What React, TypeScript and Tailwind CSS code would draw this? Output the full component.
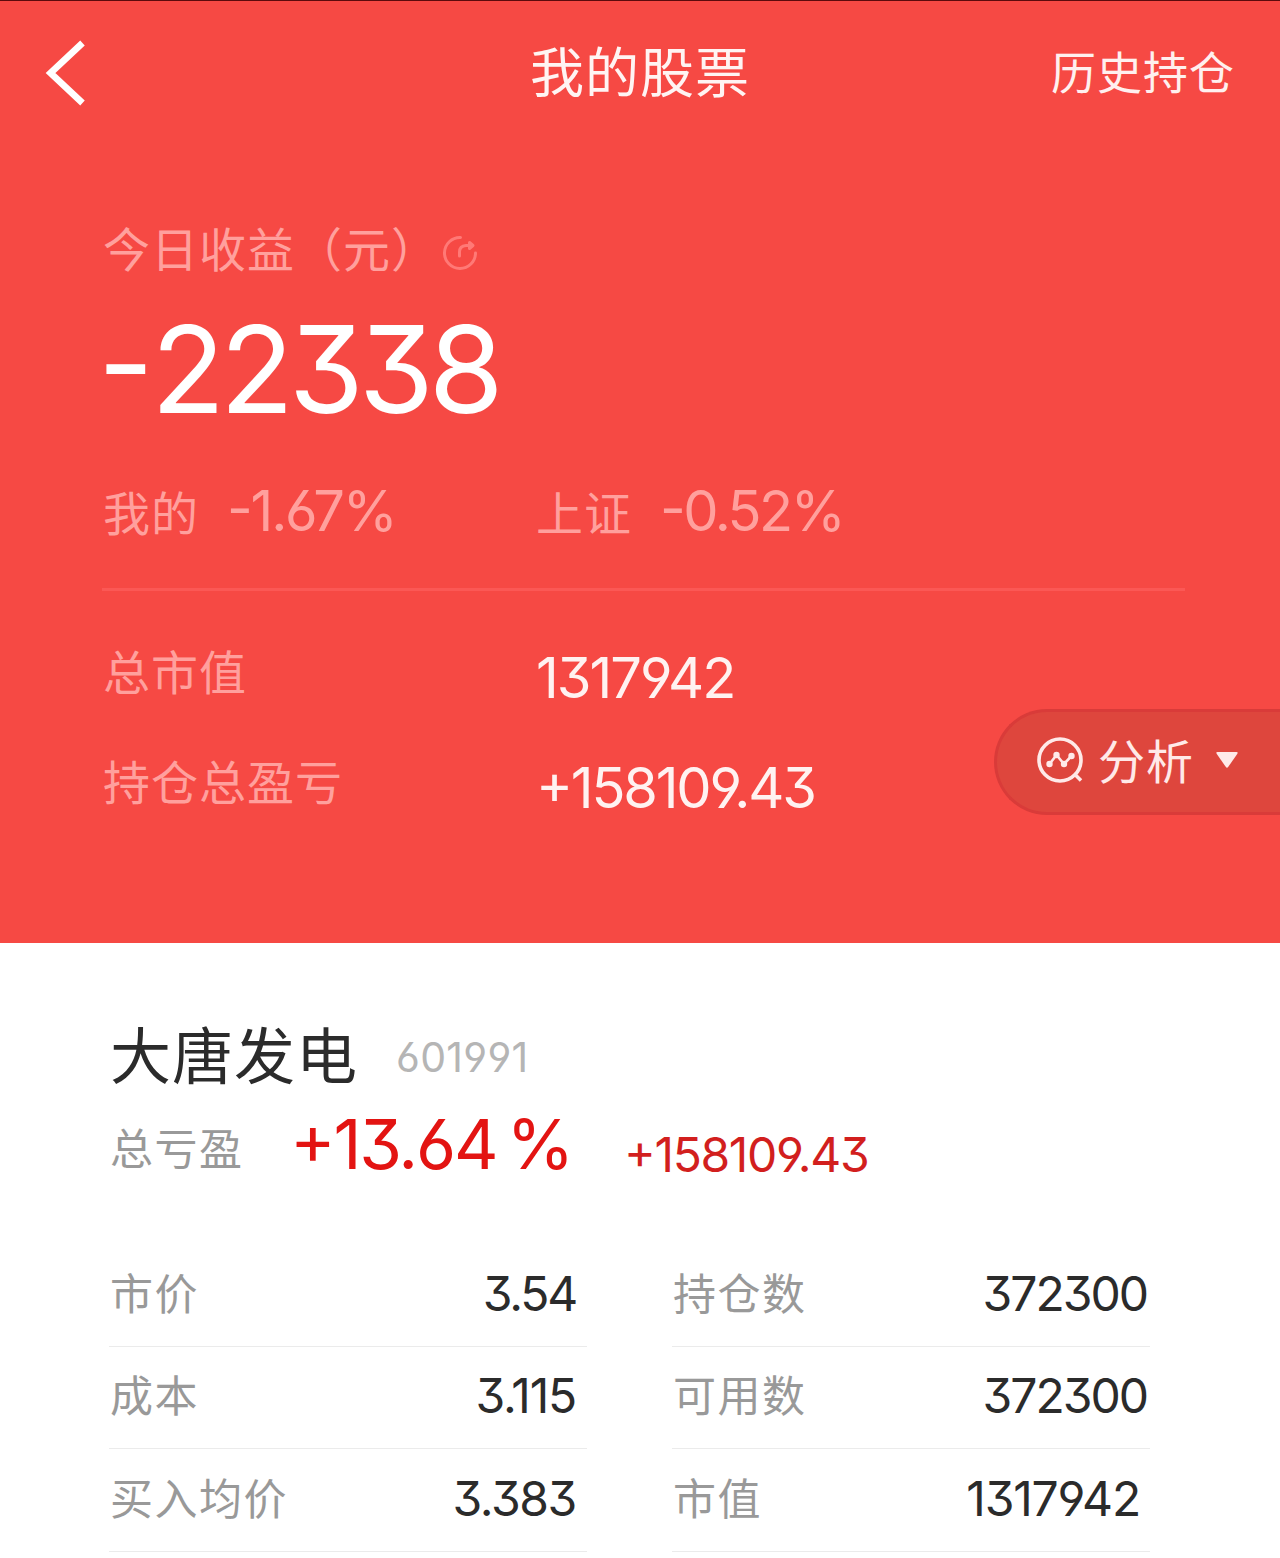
import type { ReactNode } from 'react';
import clsx from 'clsx';

interface Quote {
    label: string;
    value: string;
    valueClass: string;
}

const leftQuotes: Quote[] = [
    { label: '市价', value: '3.54', valueClass: 'mr-[11px] tracking-[-2.2px]' },
    { label: '成本', value: '3.115', valueClass: 'mr-[11px] tracking-[-1.2px]' },
    { label: '买入均价', value: '3.383', valueClass: 'mr-[11px] tracking-[-1.4px]' },
];

const rightQuotes: Quote[] = [
    { label: '持仓数', value: '372300', valueClass: 'mr-[3px] tracking-[-2px]' },
    { label: '可用数', value: '372300', valueClass: 'mr-[3px] tracking-[-2px]' },
    { label: '市值', value: '1317942', valueClass: 'mr-[10px] tracking-[-1.2px]' },
];

// Latin digits: flat-top 3, open 6 and 9, signs raised to cap height
function Num({ className, children }: { className?: string; children: ReactNode }) {
    return (
        <span className={clsx("block whitespace-nowrap font-['Inter',sans-serif] leading-none [font-feature-settings:'cv03','cv04','cv09','case']", className)}>
            {children}
        </span>
    );
}

function Label({ className, children }: { className?: string; children: ReactNode }) {
    return <span className={clsx('block whitespace-nowrap leading-none', className)}>{children}</span>;
}

function QuoteColumn({ items }: { items: Quote[] }) {
    return (
        <div className="w-[478px]">
            {items.map(item => (
                <div key={item.label} className="flex h-[102.5px] items-center justify-between border-b border-[#ebebeb]">
                    <Label className="mb-[7px] ml-px text-[43px] tracking-[1.5px] text-[#999]">{item.label}</Label>
                    <Num className={clsx('mb-[2px] text-[48px] text-[#2b2b2b]', item.valueClass)}>{item.value}</Num>
                </div>
            ))}
        </div>
    );
}

export default function App() {
    return (
        <div className="h-[1558px] w-[1280px] overflow-hidden bg-white font-['Noto_Sans_CJK_SC',sans-serif]">
            <section className="relative h-[943px] border-t border-[#5c0a0c] bg-[#f64944]">
                <header className="grid h-[142px] grid-cols-3 items-center">
                    <svg className="mt-px ml-[44px]" width="44" height="68" viewBox="0 0 44 68" fill="none" stroke="#fff" strokeWidth="6.6">
                        <path d="M38.5 4 L6.5 34 L38.5 64" />
                    </svg>
                    <Label className="mb-[5px] text-center text-[54px] tracking-[1px] text-[#fff4f3]">我的股票</Label>
                    <Label className="mr-[45px] mb-[4px] text-right text-[45px] tracking-[1px] text-[#fff0ef]">历史持仓</Label>
                </header>

                <div className="px-[103px] text-[#ffa09d]">
                    <div className="mt-[75px] flex h-[60px] items-center">
                        <Label className="mb-[4px] text-[47px] tracking-[1px]">今日收益（元）</Label>
                        <svg className="mt-[10px] ml-[2px]" width="38" height="38" viewBox="0 0 38 38" fill="none" stroke="#ff7976" strokeWidth="3" strokeLinecap="round" strokeLinejoin="round">
                            <path d="M19.5 3.5 A15.5 15.5 0 1 0 34.5 19" />
                            <path d="M18.5 22 V18 Q18.5 12 25 11.5 H30" />
                            <path d="M28.5 8.5 L32 11.5 L28.5 14.5 Z" fill="#ff7976" />
                        </svg>
                    </div>

                    <Num className="mt-[31px] -ml-[5px] text-[121px] tracking-[-5px] text-white">
                        <span className="tracking-[-2.5px]">-</span>22338
                    </Num>

                    <div className="mt-[50px] grid h-[62px] grid-cols-[433px_1fr] items-center">
                        <div className="flex items-center">
                            <Label className="mb-px w-[124px] text-[47px] tracking-[1px]">我的</Label>
                            <Num className="text-[56px] tracking-[-2.2px]">-1.67%</Num>
                        </div>
                        <div className="flex items-center">
                            <Label className="mb-px w-[124px] text-[47px] tracking-[1px]">上证</Label>
                            <Num className="text-[56px] tracking-[-2.5px]">-0.52%</Num>
                        </div>
                    </div>

                    <div className="mt-[46px] -ml-px h-[3px] w-[1083px] bg-[#fb5855]" />

                    <div className="mt-[55px] grid h-[60px] grid-cols-[433px_1fr] items-center">
                        <Label className="mb-[16px] text-[47px] tracking-[1px]">总市值</Label>
                        <Num className="text-[56px] tracking-[-2px] text-[#fff2f1]">1317942</Num>
                    </div>
                    <div className="mt-[50px] grid h-[60px] grid-cols-[433px_1fr] items-center">
                        <Label className="mb-[16px] text-[47px] tracking-[1px]">持仓总盈亏</Label>
                        <Num className="text-[56px] tracking-[-2.2px] text-[#fff2f1]">+158109.43</Num>
                    </div>
                </div>

                <button className="absolute top-[708px] right-0 flex h-[106px] w-[286px] items-center rounded-l-full border-3 border-r-0 border-[#d93b39] bg-[#de463d] pl-[38px] text-[#ffe9e8]">
                    <svg className="mb-[4px]" width="50" height="50" viewBox="0 0 50 50" fill="none" stroke="currentColor" strokeWidth="3.6">
                        <circle cx="25" cy="25" r="21" />
                        <path d="M39 38.5 L46 45.5" />
                        <path d="M14.5 29 L21.5 20 L29 29 L36.5 21" strokeWidth="2.6" />
                        <g fill="currentColor" stroke="none">
                            <circle cx="14.5" cy="29" r="3.2" />
                            <circle cx="21.5" cy="20" r="3.2" />
                            <circle cx="29" cy="29" r="3.2" />
                            <circle cx="36.5" cy="21" r="3.2" />
                        </g>
                    </svg>
                    <Label className="mb-[8px] ml-[13px] text-[47px] tracking-[1px]">分析</Label>
                    <svg className="mb-[4px] ml-[21px]" width="24" height="18" viewBox="0 0 24 18" fill="currentColor">
                        <path d="M2.5 1 H21.5 Q23.5 1 22.2 3 L13.3 15.8 Q12 17.6 10.7 15.8 L1.8 3 Q0.5 1 2.5 1 Z" />
                    </svg>
                </button>
            </section>

            <section className="px-[109px] pt-[75px]">
                <div className="flex h-[76px] items-center">
                    <Label className="mb-[8px] ml-px text-[61px] tracking-[1px] text-[#2b2b2b]">大唐发电</Label>
                    <Num className="mt-[3px] ml-[38px] text-[41px] tracking-[0.3px] text-[#b5b5b5]">601991</Num>
                </div>
                <div className="mt-[12px] flex h-[76px] items-center">
                    <Label className="mt-[5px] ml-px w-[180px] text-[43px] tracking-[1.5px] text-[#999]">总亏盈</Label>
                    <Num className="text-[69px] tracking-[-2.2px] text-[#e31412] [word-spacing:-7px]">+13.64 %</Num>
                    <Num className="mt-[21px] ml-[52px] text-[48px] tracking-[-1.35px] text-[#d21f1e]">+158109.43</Num>
                </div>
                <div className="mt-[62px] flex gap-[85px]">
                    <QuoteColumn items={leftQuotes} />
                    <QuoteColumn items={rightQuotes} />
                </div>
            </section>
        </div>
    );
}
